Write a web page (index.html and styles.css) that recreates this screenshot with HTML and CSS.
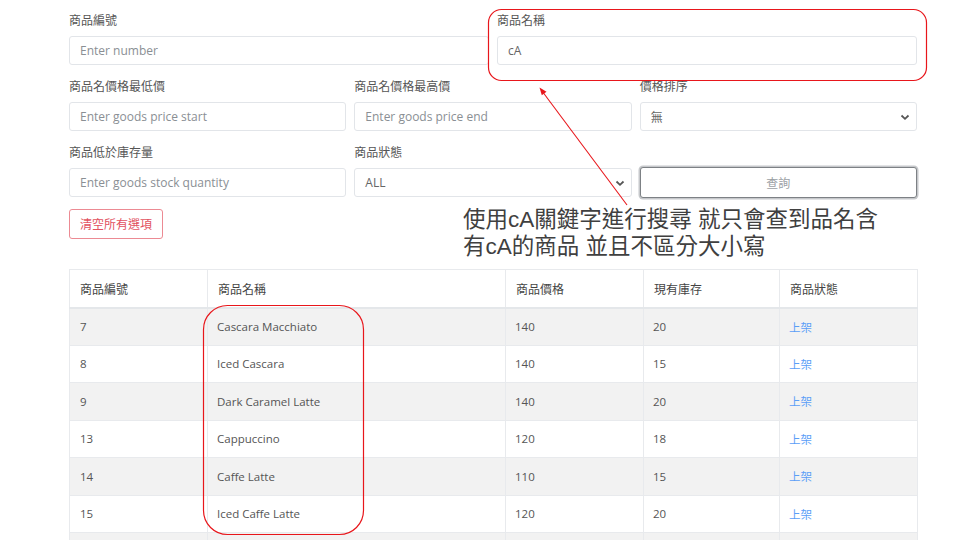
FILE: index.html
```html
<!DOCTYPE html>
<html lang="zh-Hant">
<head>
<meta charset="utf-8">
<title>商品查詢</title>
<link rel="stylesheet" href="styles.css">
</head>
<body>
<div class="page">
  <form class="filters">
    <div class="row two">
      <div class="field">
        <label>商品編號</label>
        <input class="control" type="text" placeholder="Enter number">
      </div>
      <div class="field">
        <label>商品名稱</label>
        <input class="control" type="text" value="cA">
      </div>
    </div>
    <div class="row three">
      <div class="field">
        <label>商品名價格最低價</label>
        <input class="control" type="text" placeholder="Enter goods price start">
      </div>
      <div class="field">
        <label>商品名價格最高價</label>
        <input class="control" type="text" placeholder="Enter goods price end">
      </div>
      <div class="field">
        <label>價格排序</label>
        <div class="select"><span>無</span><svg class="chev" width="10" height="8" viewBox="0 0 10 8"><path d="M1.5 2.5 L5 5.8 L8.5 2.5" fill="none" stroke="#555" stroke-width="1.8"/></svg></div>
      </div>
    </div>
    <div class="row three">
      <div class="field">
        <label>商品低於庫存量</label>
        <input class="control" type="text" placeholder="Enter goods stock quantity">
      </div>
      <div class="field">
        <label>商品狀態</label>
        <div class="select"><span>ALL</span><svg class="chev" width="10" height="8" viewBox="0 0 10 8"><path d="M1.5 2.5 L5 5.8 L8.5 2.5" fill="none" stroke="#555" stroke-width="1.8"/></svg></div>
      </div>
      <div class="field bottom">
        <button type="button" class="btn-query">查詢</button>
      </div>
    </div>
    <div class="actions">
      <button type="button" class="btn-clear">清空所有選項</button>
    </div>
  </form>

  <table class="goods">
    <colgroup>
      <col class="c1"><col class="c2"><col class="c3"><col class="c4"><col class="c5">
    </colgroup>
    <thead>
      <tr><th>商品編號</th><th>商品名稱</th><th>商品價格</th><th>現有庫存</th><th>商品狀態</th></tr>
    </thead>
    <tbody>
      <tr><td>7</td><td>Cascara Macchiato</td><td>140</td><td>20</td><td><a class="status">上架</a></td></tr>
      <tr><td>8</td><td>Iced Cascara</td><td>140</td><td>15</td><td><a class="status">上架</a></td></tr>
      <tr><td>9</td><td>Dark Caramel Latte</td><td>140</td><td>20</td><td><a class="status">上架</a></td></tr>
      <tr><td>13</td><td>Cappuccino</td><td>120</td><td>18</td><td><a class="status">上架</a></td></tr>
      <tr><td>14</td><td>Caffe Latte</td><td>110</td><td>15</td><td><a class="status">上架</a></td></tr>
      <tr><td>15</td><td>Iced Caffe Latte</td><td>120</td><td>20</td><td><a class="status">上架</a></td></tr>
      <tr class="cut"><td></td><td></td><td></td><td></td><td></td></tr>
    </tbody>
  </table>
</div>

<div class="note">使用cA關鍵字進行搜尋 就只會查到品名含<br>有cA的商品 並且不區分大小寫</div>

<svg class="marks" width="960" height="540" viewBox="0 0 960 540">
  <rect x="488.5" y="9.5" width="438" height="71" rx="13" fill="none" stroke="#e8161b" stroke-width="1.2"/>
  <rect x="203.5" y="305.5" width="160" height="229" rx="24" fill="none" stroke="#e8161b" stroke-width="1.2"/>
  <line x1="627" y1="205" x2="542" y2="91" stroke="#e8161b" stroke-width="1.1"/>
  <path d="M539.5 87.5 L546.5 91.8 L541.8 95.3 Z" fill="#e8161b"/>
</svg>
</body>
</html>
```

FILE: styles.css
```css
* { box-sizing: border-box; }
html, body { margin: 0; padding: 0; background: #fff; }
body {
  font-family: "Open Sans", "Noto Sans CJK TC", sans-serif;
  font-size: 12px;
  color: #555;
  width: 960px;
  height: 540px;
  overflow: hidden;
  position: relative;
}
.page {
  margin-left: 69px;
  width: 848px;
  padding-top: 11px;
}
.row {
  display: grid;
  gap: 8px;
  margin-bottom: 12px;
}
.row.two { grid-template-columns: 1fr 1fr; }
.row.three { grid-template-columns: 1fr 1fr 1fr; }
.field { display: flex; flex-direction: column; }
.field.bottom { justify-content: flex-end; }
.field label {
  display: block;
  height: 18px;
  line-height: 18px;
  margin-bottom: 7px;
  color: #555;
  font-family: "Noto Sans CJK TC", sans-serif;
  font-size: 12px;
}
.control, .select {
  height: 29px;
  width: 100%;
  border: 1px solid #e2e5e9;
  border-radius: 3px;
  padding: 0 10px;
  font-family: "Open Sans", "Noto Sans CJK TC", sans-serif;
  font-size: 12px;
  color: #666;
  background: #fff;
  outline: none;
}
.control::placeholder { color: #8a8f94; }
.select {
  display: flex;
  align-items: center;
  justify-content: space-between;
  padding-right: 6px;
}
.chev { display: block; }
.btn-query {
  height: 31px;
  margin-bottom: -1px;
  width: 100%;
  border: 1px solid #7d8185;
  box-shadow: 0 0 0 1.5px #c6c8cb;
  border-radius: 3px;
  background: #fff;
  color: #9ba0a4;
  font-family: "Noto Sans CJK TC", sans-serif;
  font-size: 12px;
}
.actions { margin-bottom: 30px; height: 30px; }
.btn-clear {
  display: block;
  height: 30px;
  padding: 0 10px;
  white-space: nowrap;
  border: 1px solid #ec8a93;
  border-radius: 3px;
  background: #fff;
  color: #e2525f;
  font-family: "Noto Sans CJK TC", sans-serif;
  font-size: 12px;
  line-height: 28px;
}
.goods {
  width: 848px;
  border-collapse: collapse;
  table-layout: fixed;
  border: 1px solid #e8eaed;
}
.c1 { width: 138px; }
.c2 { width: 298px; }
.c3 { width: 138px; }
.c4 { width: 136px; }
.c5 { width: 138px; }
.goods th, .goods td {
  border: 1px solid #e8eaed;
  text-align: left;
  padding: 0 9px;
  font-size: 11.5px;
  color: #555;
  white-space: nowrap;
}
.goods th {
  height: 38px;
  font-weight: normal;
  font-size: 12px;
  color: #444;
  font-family: "Noto Sans CJK TC", sans-serif;
  padding-left: 10px;
  border-bottom: 2px solid #e4e7ea;
}
.goods td { height: 37.5px; }
.goods td:first-child { padding-left: 10px; }
.goods tbody tr:nth-child(odd) td { background: #f2f2f2; }
.status {
  color: #5b9ef7;
  font-family: "Noto Sans CJK TC", sans-serif;
  text-decoration: none;
}
.note {
  position: absolute;
  left: 463px;
  top: 206px;
  font-family: "Liberation Sans", "Noto Sans CJK TC", sans-serif;
  font-size: 22.5px;
  line-height: 27px;
  color: #404040;
  white-space: nowrap;
}
.marks {
  position: absolute;
  left: 0;
  top: 0;
  pointer-events: none;
}
```
